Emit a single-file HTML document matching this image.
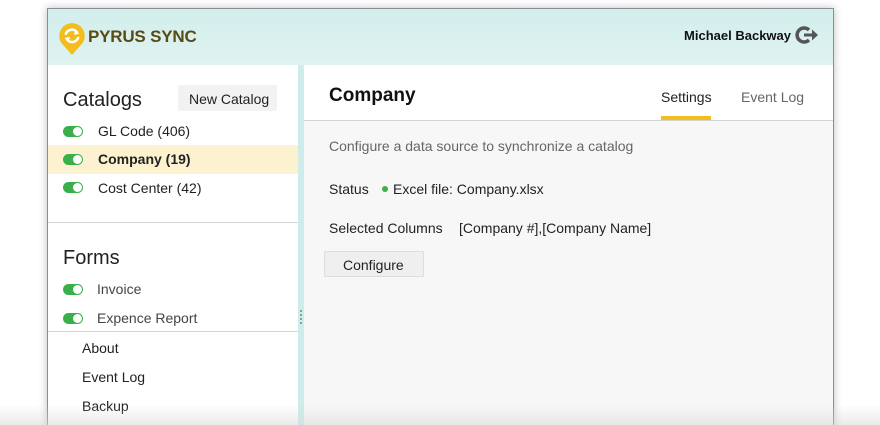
<!DOCTYPE html><html><head><style>
html,body{margin:0;width:880px;height:425px;overflow:hidden;}
body{background:#fff;position:relative;font-family:"Liberation Sans",sans-serif;}
.win{position:absolute;left:47px;top:8px;width:785px;height:430px;border:1px solid #8a8f93;background:#d4efee;box-shadow:0 0 8px rgba(0,0,0,.25);}
.hdr{position:absolute;left:0;top:0;width:785px;height:56px;background:linear-gradient(#d2eeec,#dff3f1);}
.logo{position:absolute;left:10px;top:13px;}
.brand{position:absolute;left:40px;top:18px;font-weight:bold;font-size:17px;color:#5a4a14;letter-spacing:-.2px}
.user{position:absolute;right:42px;top:19px;font-weight:bold;font-size:13px;color:#111}
.side{position:absolute;left:0;top:56px;width:250px;height:380px;background:#fff}
.split{position:absolute;left:250px;top:56px;width:6px;height:380px;background:#cdeceb}
.main{position:absolute;left:256px;top:56px;width:529px;height:380px;background:#f7f7f7}
.mh{height:55px;background:#fff;border-bottom:1px solid #d4d4d4;position:relative}
.t{position:absolute;font-size:14px;color:#222;white-space:nowrap}
.tg{position:absolute;left:15px;width:20px;height:11px;border-radius:6px;background:#3bb04a}
.tg:after{content:"";position:absolute;right:1px;top:1px;width:9px;height:9px;border-radius:50%;background:#fff}
.fade{position:absolute;left:0;top:405px;width:880px;height:20px;background:linear-gradient(rgba(255,255,255,0),rgba(215,215,215,.5));}
</style></head><body>
<div class="win">
<div class="hdr">
<svg class="logo" width="28" height="34" viewBox="0 0 26 32"><path d="M13 31 L5 22 A12 12 0 1 1 21 22 Z" fill="#f3bd1e"/><path d="M7 12 A6 6 0 0 1 18 10" stroke="#fff" stroke-width="2.4" fill="none"/><path d="M19 14 A6 6 0 0 1 8 16" stroke="#fff" stroke-width="2.4" fill="none"/><path d="M16 7 L20 11 L15 12Z M10 19 L6 15 L11 14Z" fill="#fff"/></svg>
<div class="brand">PYRUS SYNC</div>
<div class="user">Michael Backway</div>
<svg style="position:absolute;right:14px;top:16px" width="24" height="20" viewBox="0 0 24 20"><path d="M14 5 A7 7 0 1 0 14 15" stroke="#555" stroke-width="3.5" fill="none"/><path d="M9 8.5h8v-4l6 5.5-6 5.5v-4H9z" fill="#555"/></svg>
</div>
<div class="side">
<div class="t" style="left:15px;top:24px;font-size:20px">Catalogs</div>
<div style="position:absolute;left:130px;top:20px;width:99px;height:26px;background:#f2f2f2;border-radius:2px"></div>
<div class="t" style="left:141px;top:26px">New Catalog</div>
<div class="tg" style="top:61px"></div><div class="t" style="left:50px;top:58px">GL Code (406)</div>
<div style="position:absolute;left:0;top:80px;width:250px;height:29px;background:#fcf2d0"></div>
<div class="tg" style="top:89px"></div><div class="t" style="left:50px;top:86px;font-weight:bold">Company (19)</div>
<div class="tg" style="top:117px"></div><div class="t" style="left:50px;top:115px">Cost Center (42)</div>
<div style="position:absolute;left:0;top:157px;width:250px;height:1px;background:#d4d4d4"></div>
<div class="t" style="left:15px;top:182px;font-size:20px">Forms</div>
<div class="tg" style="top:219px"></div><div class="t" style="left:49px;top:216px;color:#444">Invoice</div>
<div class="tg" style="top:248px"></div><div class="t" style="left:49px;top:245px;color:#444">Expence Report</div>
<div style="position:absolute;left:0;top:266px;width:250px;height:1px;background:#d4d4d4"></div>
<div class="t" style="left:34px;top:275px">About</div>
<div class="t" style="left:34px;top:304px">Event Log</div>
<div class="t" style="left:34px;top:333px">Backup</div>
</div>
<div class="split"><div style="position:absolute;left:2px;top:245px;width:2px;height:14px;border-left:2px dotted #7a9"></div></div>
<div class="main">
<div class="mh">
<div class="t" style="left:25px;top:20px;font-size:19px;font-weight:bold;color:#111">Company</div>
<div class="t" style="left:357px;top:24px">Settings</div>
<div style="position:absolute;left:357px;top:51px;width:50px;height:4px;background:#f3bd1e"></div>
<div class="t" style="left:437px;top:24px;color:#666">Event Log</div>
</div>
<div class="t" style="left:25px;top:73px;color:#666">Configure a data source to synchronize a catalog</div>
<div class="t" style="left:25px;top:116px">Status</div>
<div style="position:absolute;left:78px;top:121px;width:6px;height:6px;border-radius:50%;background:#3bb04a"></div>
<div class="t" style="left:89px;top:116px">Excel file: Company.xlsx</div>
<div class="t" style="left:25px;top:155px">Selected Columns</div>
<div class="t" style="left:155px;top:155px">[Company #],[Company Name]</div>
<div style="position:absolute;left:20px;top:186px;width:98px;height:24px;background:#efefef;border:1px solid #ddd;border-radius:2px"></div>
<div class="t" style="left:39px;top:192px">Configure</div>
</div>
</div>
<div class="fade"></div>
</body></html>
